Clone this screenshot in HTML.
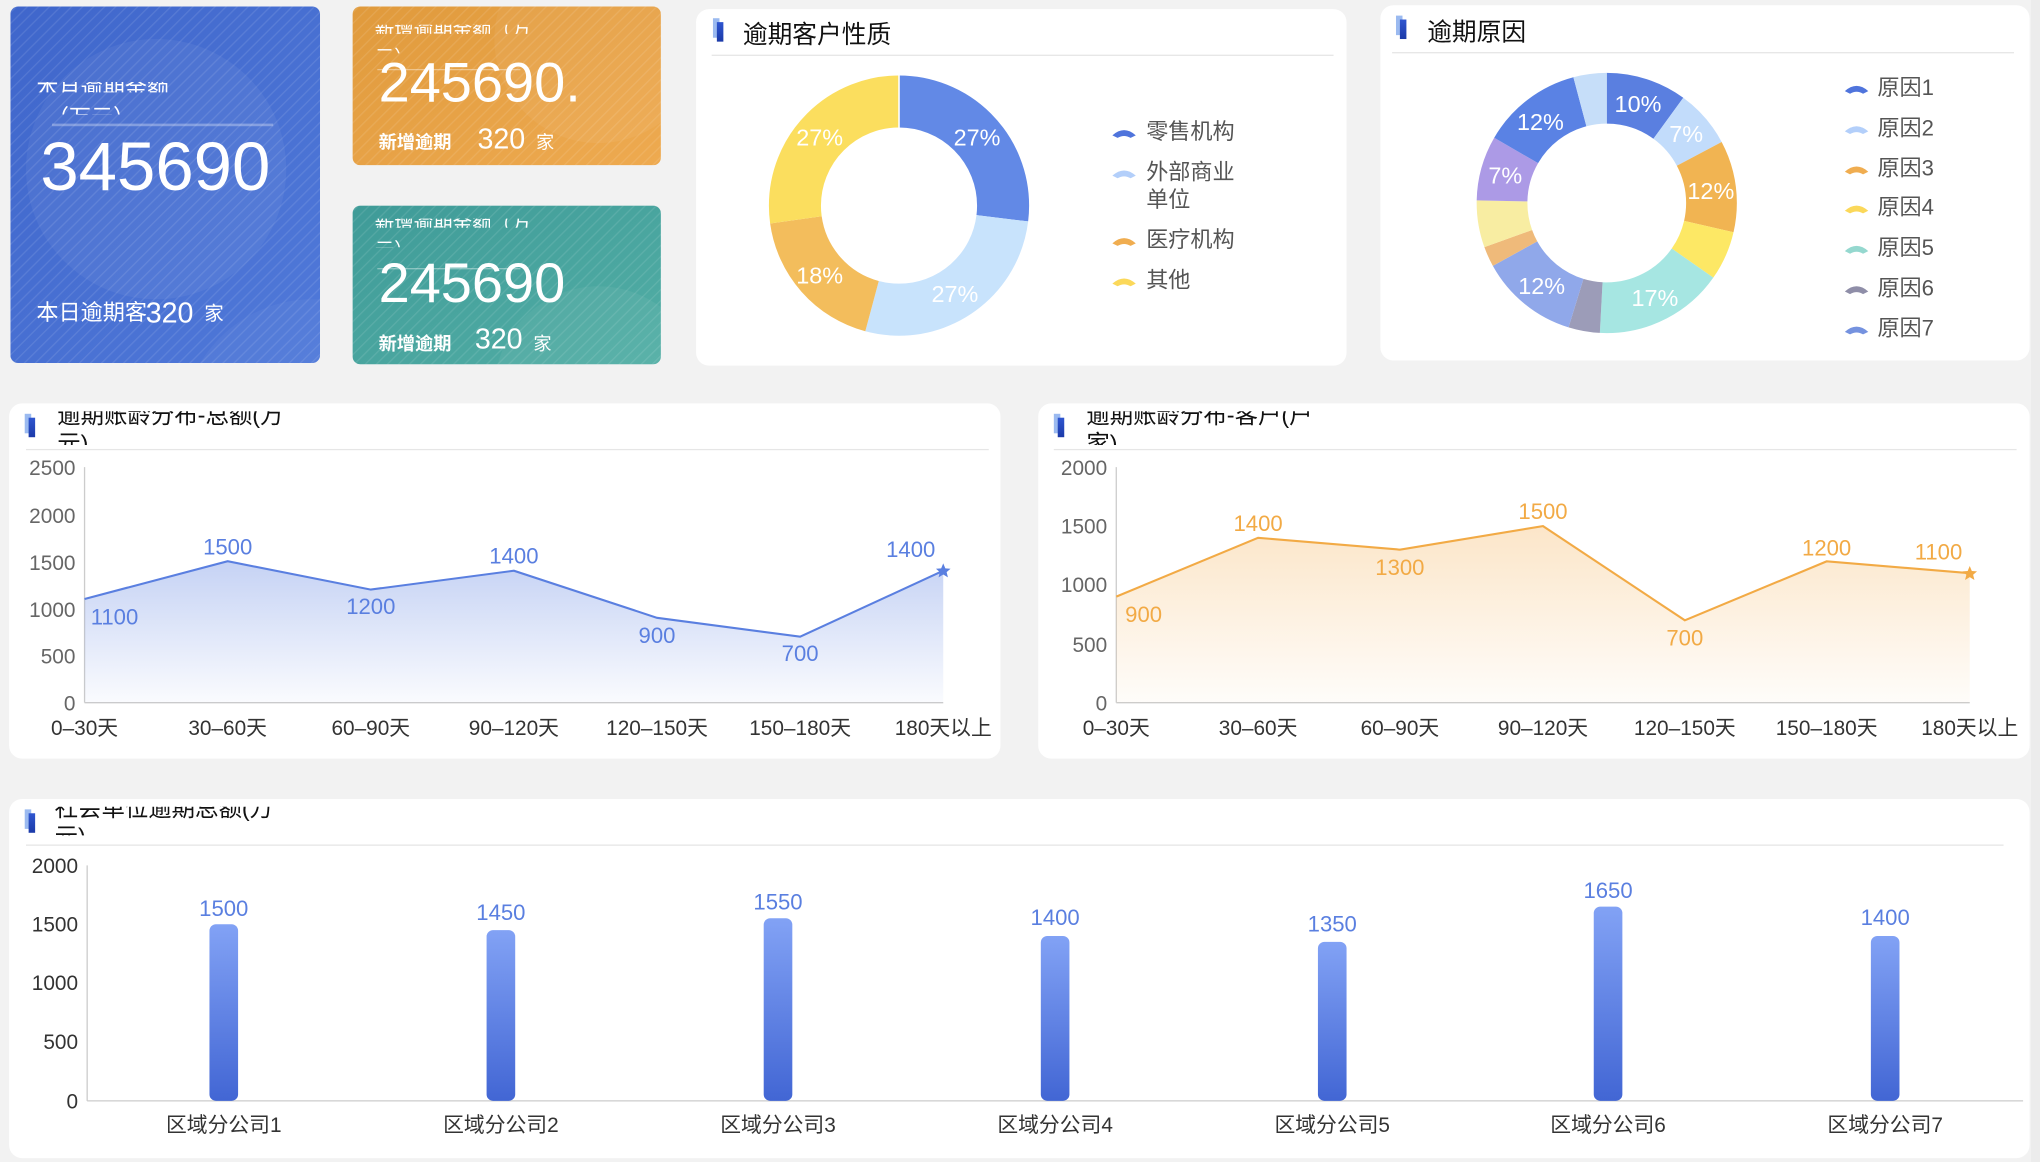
<!DOCTYPE html>
<html><head><meta charset="utf-8"><style>
html,body{margin:0;padding:0;background:#f2f2f2;width:2040px;height:1162px;overflow:hidden}
svg{display:block}
text{font-family:"Liberation Sans","Noto Sans CJK SC",sans-serif}
</style></head><body>
<svg width="2040" height="1162" viewBox="0 0 1568 893" preserveAspectRatio="none" xmlns="http://www.w3.org/2000/svg">
<defs>
<linearGradient id="gb" x1="0" y1="0" x2="1" y2="1"><stop offset="0" stop-color="#3f66cb"/><stop offset="1" stop-color="#5079d9"/></linearGradient>
<linearGradient id="go" x1="0" y1="0" x2="1" y2="1"><stop offset="0" stop-color="#e09a3c"/><stop offset="1" stop-color="#eeaa50"/></linearGradient>
<linearGradient id="gt" x1="0" y1="0" x2="1" y2="1"><stop offset="0" stop-color="#3f9b98"/><stop offset="1" stop-color="#52aea5"/></linearGradient>
<pattern id="stripe" width="6" height="6" patternUnits="userSpaceOnUse" patternTransform="rotate(45)"><rect width="1" height="6" fill="rgba(255,255,255,0.1)"/></pattern>
<linearGradient id="ab" x1="0" y1="0" x2="0" y2="1"><stop offset="0" stop-color="#5a7fe0" stop-opacity="0.35"/><stop offset="1" stop-color="#5a7fe0" stop-opacity="0.03"/></linearGradient>
<linearGradient id="ao" x1="0" y1="0" x2="0" y2="1"><stop offset="0" stop-color="#f3ab4a" stop-opacity="0.3"/><stop offset="1" stop-color="#f3ab4a" stop-opacity="0.03"/></linearGradient>
<linearGradient id="bar" x1="0" y1="0" x2="0" y2="1"><stop offset="0" stop-color="#82a2f5"/><stop offset="1" stop-color="#4266d4"/></linearGradient>
<linearGradient id="ic" x1="0" y1="0" x2="0" y2="1"><stop offset="0" stop-color="#2f56d0"/><stop offset="1" stop-color="#1b3aa8"/></linearGradient>
<clipPath id="c1"><rect x="8" y="5" width="238" height="274" rx="6"/></clipPath>
<clipPath id="c2"><rect x="271" y="5" width="237" height="122" rx="6"/></clipPath>
<clipPath id="c3"><rect x="271" y="158" width="237" height="122" rx="6"/></clipPath>
<clipPath id="b1"><rect x="0" y="63" width="300" height="8"/></clipPath>
<clipPath id="b2"><rect x="0" y="81" width="300" height="7"/></clipPath>
<clipPath id="o1"><rect x="0" y="19" width="500" height="7"/></clipPath>
<clipPath id="o2"><rect x="0" y="35" width="500" height="6"/></clipPath>
<clipPath id="q1"><rect x="0" y="168" width="500" height="7"/></clipPath>
<clipPath id="q2"><rect x="0" y="183" width="500" height="7"/></clipPath>
<clipPath id="n2"><rect x="280" y="20" width="168" height="100"/></clipPath>
<clipPath id="n3"><rect x="280" y="170" width="153" height="100"/></clipPath>
<clipPath id="lt1"><rect x="0" y="316" width="1568" height="26"/></clipPath>
<clipPath id="lt3"><rect x="0" y="620" width="1568" height="22"/></clipPath>
</defs>

<!-- KPI cards -->
<g clip-path="url(#c1)">
<rect x="8" y="5" width="238" height="274" fill="url(#gb)"/>
<circle cx="120" cy="130" r="100" fill="rgba(255,255,255,0.05)"/>
<circle cx="240" cy="330" r="100" fill="rgba(255,255,255,0.04)"/>
<rect x="8" y="5" width="238" height="274" fill="url(#stripe)"/>
<text x="28" y="74" fill="#fff" font-size="17" clip-path="url(#b1)">本月逾期金额</text>
<text x="36" y="96" fill="#fff" font-size="17" clip-path="url(#b2)">（万元）</text>
<rect x="40" y="95" width="170" height="2" fill="rgba(255,255,255,0.3)"/>
<text x="31" y="146" fill="#fff" font-size="53">345690</text>
<text x="28" y="246" fill="#fff" font-size="17">本日逾期客</text>
<text x="112" y="248" fill="#fff" font-size="22">320</text>
<text x="157" y="246" fill="#fff" font-size="15">家</text>
</g>
<g clip-path="url(#c2)">
<rect x="271" y="5" width="237" height="122" fill="url(#go)"/>
<circle cx="460" cy="30" r="80" fill="rgba(255,255,255,0.05)"/>
<rect x="271" y="5" width="237" height="122" fill="url(#stripe)"/>
<text x="288" y="28" fill="#fff" font-size="15" clip-path="url(#o1)">新增逾期金额（万</text>
<text x="288" y="49" fill="#fff" font-size="15" clip-path="url(#o2)">元）</text>
<rect x="290" y="53" width="110" height="1" fill="rgba(255,255,255,0.4)"/>
<text x="291" y="78" fill="#fff" font-size="43" clip-path="url(#n2)">245690.</text>
<text x="291" y="114" fill="#fff" font-size="14" font-weight="bold">新增逾期</text>
<text x="367" y="114" fill="#fff" font-size="22">320</text>
<text x="412" y="114" fill="#fff" font-size="14">家</text>
</g>
<g clip-path="url(#c3)">
<rect x="271" y="158" width="237" height="122" fill="url(#gt)"/>
<circle cx="460" cy="300" r="80" fill="rgba(255,255,255,0.05)"/>
<rect x="271" y="158" width="237" height="122" fill="url(#stripe)"/>
<text x="288" y="177" fill="#fff" font-size="15" clip-path="url(#q1)">新增逾期金额（万</text>
<text x="288" y="197" fill="#fff" font-size="15" clip-path="url(#q2)">元）</text>
<rect x="290" y="206" width="110" height="1" fill="rgba(255,255,255,0.4)"/>
<text x="291" y="232" fill="#fff" font-size="43" clip-path="url(#n3)">245690</text>
<text x="291" y="269" fill="#fff" font-size="14" font-weight="bold">新增逾期</text>
<text x="365" y="268" fill="#fff" font-size="22">320</text>
<text x="410" y="269" fill="#fff" font-size="14">家</text>
</g>

<!-- Donut 1 card -->
<rect x="535" y="7" width="500" height="274" rx="10" fill="#fff"/>
<rect x="548" y="14" width="5" height="15" fill="#9bbaf0"/><rect x="551" y="17" width="5" height="15" fill="url(#ic)"/>
<text x="571" y="33" font-size="19" fill="#111">逾期客户性质</text>
<rect x="547" y="42" width="478" height="1" fill="#e6e6e6"/>
<g transform="rotate(-90 691 158)" fill="none" stroke-width="40">
<circle cx="691" cy="158" r="80" stroke="#6289e6" stroke-dasharray="135.4 600" stroke-dashoffset="0"/>
<circle cx="691" cy="158" r="80" stroke="#c8e3fc" stroke-dasharray="136.8 600" stroke-dashoffset="-135.4"/>
<circle cx="691" cy="158" r="80" stroke="#f3bd5c" stroke-dasharray="93.6 600" stroke-dashoffset="-272.2"/>
<circle cx="691" cy="158" r="80" stroke="#fbde5e" stroke-dasharray="137 600" stroke-dashoffset="-365.8"/>
</g>
<g stroke="#fff" stroke-width="1.2"><line x1="691" y1="58" x2="691" y2="98"/></g>
<g fill="#fff" font-size="18" text-anchor="middle">
<text x="751" y="112">27%</text><text x="734" y="232">27%</text><text x="630" y="218">18%</text><text x="630" y="112">27%</text></g>
<g font-size="17" fill="#555">
<path d="M855 104 q9 -8 18 0 l-4 2 q-5 -3 -10 0z" fill="#4f74dc"/><text x="881" y="107">零售机构</text>
<path d="M855 135 q9 -8 18 0 l-4 2 q-5 -3 -10 0z" fill="#b3cffa"/><text x="881" y="138">外部商业</text><text x="881" y="159">单位</text>
<path d="M855 187 q9 -8 18 0 l-4 2 q-5 -3 -10 0z" fill="#f0ad50"/><text x="881" y="190">医疗机构</text>
<path d="M855 218 q9 -8 18 0 l-4 2 q-5 -3 -10 0z" fill="#fbd85a"/><text x="881" y="221">其他</text>
</g>

<!-- Donut 2 card -->
<rect x="1061" y="4" width="499" height="273" rx="10" fill="#fff"/>
<rect x="1073" y="12" width="5" height="15" fill="#9bbaf0"/><rect x="1076" y="15" width="5" height="15" fill="url(#ic)"/>
<text x="1097" y="31" font-size="19" fill="#111">逾期原因</text>
<rect x="1070" y="40" width="478" height="1" fill="#e6e6e6"/>
<g transform="rotate(-90 1235 156)" fill="none" stroke-width="39">
<circle cx="1235" cy="156" r="80.5" stroke="#5a7fe0" stroke-dasharray="50.6 600" stroke-dashoffset="0"/>
<circle cx="1235" cy="156" r="80.5" stroke="#c2dcfb" stroke-dasharray="36.5 600" stroke-dashoffset="-50.6"/>
<circle cx="1235" cy="156" r="80.5" stroke="#f1b452" stroke-dasharray="57.6 600" stroke-dashoffset="-87.1"/>
<circle cx="1235" cy="156" r="80.5" stroke="#fde865" stroke-dasharray="30.9 600" stroke-dashoffset="-144.7"/>
<circle cx="1235" cy="156" r="80.5" stroke="#a6e6e2" stroke-dasharray="81.5 600" stroke-dashoffset="-175.6"/>
<circle cx="1235" cy="156" r="80.5" stroke="#9c9cb8" stroke-dasharray="19.7 600" stroke-dashoffset="-257.1"/>
<circle cx="1235" cy="156" r="80.5" stroke="#90a8ea" stroke-dasharray="61.8 600" stroke-dashoffset="-276.8"/>
<circle cx="1235" cy="156" r="80.5" stroke="#efba7a" stroke-dasharray="12.7 600" stroke-dashoffset="-338.6"/>
<circle cx="1235" cy="156" r="80.5" stroke="#f8eda2" stroke-dasharray="29.5 600" stroke-dashoffset="-351.3"/>
<circle cx="1235" cy="156" r="80.5" stroke="#ac9ae6" stroke-dasharray="40.7 600" stroke-dashoffset="-380.8"/>
<circle cx="1235" cy="156" r="80.5" stroke="#5a82e4" stroke-dasharray="63.2 600" stroke-dashoffset="-421.5"/>
<circle cx="1235" cy="156" r="80.5" stroke="#c6def9" stroke-dasharray="21.1 600" stroke-dashoffset="-484.7"/>
</g>
<g fill="#fff" font-size="18" text-anchor="middle">
<text x="1259" y="86">10%</text><text x="1296" y="109">7%</text><text x="1315" y="153">12%</text><text x="1272" y="235">17%</text><text x="1185" y="226">12%</text><text x="1157" y="141">7%</text><text x="1184" y="100">12%</text></g>
<g font-size="17" fill="#555">
<path d="M1418 70 q9 -8 18 0 l-4 2 q-5 -3 -10 0z" fill="#4f74dc"/><text x="1443" y="73">原因1</text>
<path d="M1418 101 q9 -8 18 0 l-4 2 q-5 -3 -10 0z" fill="#b3cffa"/><text x="1443" y="104">原因2</text>
<path d="M1418 132 q9 -8 18 0 l-4 2 q-5 -3 -10 0z" fill="#f0ad50"/><text x="1443" y="135">原因3</text>
<path d="M1418 162 q9 -8 18 0 l-4 2 q-5 -3 -10 0z" fill="#fbd85a"/><text x="1443" y="165">原因4</text>
<path d="M1418 193 q9 -8 18 0 l-4 2 q-5 -3 -10 0z" fill="#95d8cf"/><text x="1443" y="196">原因5</text>
<path d="M1418 224 q9 -8 18 0 l-4 2 q-5 -3 -10 0z" fill="#8f8ea8"/><text x="1443" y="227">原因6</text>
<path d="M1418 255 q9 -8 18 0 l-4 2 q-5 -3 -10 0z" fill="#7592df"/><text x="1443" y="258">原因7</text>
</g>
<rect x="1561" y="0" width="7" height="893" fill="#ececec"/>

<!-- Line chart 1 -->
<rect x="7" y="310" width="762" height="273" rx="10" fill="#fff"/>
<rect x="19" y="318" width="5" height="15" fill="#9bbaf0"/><rect x="22" y="321" width="5" height="15" fill="url(#ic)"/>
<g clip-path="url(#lt1)" font-size="18" fill="#111"><text x="44" y="325">逾期账龄分布-总额(万</text><text x="44" y="347">元)</text></g>
<rect x="20" y="345" width="740" height="1" fill="#e6e6e6"/>
<g font-size="16" fill="#666" text-anchor="end">
<text x="58" y="365">2500</text><text x="58" y="402">2000</text><text x="58" y="438">1500</text><text x="58" y="474">1000</text><text x="58" y="510">500</text><text x="58" y="546">0</text></g>
<line x1="65" y1="359" x2="65" y2="540" stroke="#ccc"/><line x1="65" y1="540" x2="725" y2="540" stroke="#ccc"/>
<path d="M65 460.3 L175 431.3 L285 453.1 L395 438.6 L505 474.8 L615 489.3 L725 438.6 L725 540 L65 540Z" fill="url(#ab)"/>
<path d="M65 460.3 L175 431.3 L285 453.1 L395 438.6 L505 474.8 L615 489.3 L725 438.6" fill="none" stroke="#5a7fe0" stroke-width="1.6"/>
<path d="M725 433 l1.6 3.8 4 .3 -3 2.6 1 4 -3.6 -2.2 -3.6 2.2 1 -4 -3 -2.6 4 -.3z" fill="#5a7fe0"/>
<g font-size="17" fill="#5a7fe0" text-anchor="middle">
<text x="88" y="480">1100</text><text x="175" y="426">1500</text><text x="285" y="472">1200</text><text x="395" y="433">1400</text><text x="505" y="494">900</text><text x="615" y="508">700</text><text x="700" y="428">1400</text></g>
<g font-size="16" fill="#333" text-anchor="middle">
<text x="65" y="565">0–30天</text><text x="175" y="565">30–60天</text><text x="285" y="565">60–90天</text><text x="395" y="565">90–120天</text><text x="505" y="565">120–150天</text><text x="615" y="565">150–180天</text><text x="725" y="565">180天以上</text></g>

<!-- Line chart 2 -->
<rect x="798" y="310" width="762" height="273" rx="10" fill="#fff"/>
<rect x="810" y="318" width="5" height="15" fill="#9bbaf0"/><rect x="813" y="321" width="5" height="15" fill="url(#ic)"/>
<g clip-path="url(#lt1)" font-size="18" fill="#111"><text x="835" y="325">逾期账龄分布-客户(户</text><text x="835" y="347">家)</text></g>
<rect x="810" y="345" width="740" height="1" fill="#e6e6e6"/>
<g font-size="16" fill="#666" text-anchor="end">
<text x="851" y="365">2000</text><text x="851" y="410">1500</text><text x="851" y="455">1000</text><text x="851" y="501">500</text><text x="851" y="546">0</text></g>
<line x1="858" y1="359" x2="858" y2="540" stroke="#ccc"/><line x1="858" y1="540" x2="1514" y2="540" stroke="#ccc"/>
<path d="M858 458.5 L967 413.3 L1076 422.4 L1186 404.3 L1295 476.7 L1404 431.4 L1514 440.5 L1514 540 L858 540Z" fill="url(#ao)"/>
<path d="M858 458.5 L967 413.3 L1076 422.4 L1186 404.3 L1295 476.7 L1404 431.4 L1514 440.5" fill="none" stroke="#f2aa45" stroke-width="1.6"/>
<path d="M1514 435 l1.6 3.8 4 .3 -3 2.6 1 4 -3.6 -2.2 -3.6 2.2 1 -4 -3 -2.6 4 -.3z" fill="#f2aa45"/>
<g font-size="17" fill="#f2aa45" text-anchor="middle">
<text x="879" y="478">900</text><text x="967" y="408">1400</text><text x="1076" y="442">1300</text><text x="1186" y="399">1500</text><text x="1295" y="496">700</text><text x="1404" y="427">1200</text><text x="1490" y="430">1100</text></g>
<g font-size="16" fill="#333" text-anchor="middle">
<text x="858" y="565">0–30天</text><text x="967" y="565">30–60天</text><text x="1076" y="565">60–90天</text><text x="1186" y="565">90–120天</text><text x="1295" y="565">120–150天</text><text x="1404" y="565">150–180天</text><text x="1514" y="565">180天以上</text></g>

<!-- Bar chart -->
<rect x="7" y="614" width="1553" height="276" rx="10" fill="#fff"/>
<rect x="19" y="622" width="5" height="15" fill="#9bbaf0"/><rect x="22" y="625" width="5" height="15" fill="url(#ic)"/>
<g clip-path="url(#lt3)" font-size="18" fill="#111"><text x="42" y="627">社会单位逾期总额(万</text><text x="42" y="649">元)</text></g>
<rect x="20" y="649" width="1520" height="1" fill="#e6e6e6"/>
<g font-size="16" fill="#333" text-anchor="end">
<text x="60" y="671">2000</text><text x="60" y="716">1500</text><text x="60" y="761">1000</text><text x="60" y="806">500</text><text x="60" y="852">0</text></g>
<line x1="67" y1="665" x2="67" y2="846" stroke="#ccc"/><line x1="67" y1="846" x2="1555" y2="846" stroke="#ccc"/>
<g fill="url(#bar)">
<rect x="161" y="710.3" width="22" height="135.7" rx="5"/>
<rect x="374" y="714.8" width="22" height="131.2" rx="5"/>
<rect x="587" y="705.7" width="22" height="140.3" rx="5"/>
<rect x="800" y="719.3" width="22" height="126.7" rx="5"/>
<rect x="1013" y="723.8" width="22" height="122.2" rx="5"/>
<rect x="1225" y="696.7" width="22" height="149.3" rx="5"/>
<rect x="1438" y="719.3" width="22" height="126.7" rx="5"/>
</g>
<g font-size="17" fill="#5a7fe0" text-anchor="middle">
<text x="172" y="704">1500</text><text x="385" y="707">1450</text><text x="598" y="699">1550</text><text x="811" y="711">1400</text><text x="1024" y="716">1350</text><text x="1236" y="690">1650</text><text x="1449" y="711">1400</text></g>
<g font-size="16" fill="#333" text-anchor="middle">
<text x="172" y="870">区域分公司1</text><text x="385" y="870">区域分公司2</text><text x="598" y="870">区域分公司3</text><text x="811" y="870">区域分公司4</text><text x="1024" y="870">区域分公司5</text><text x="1236" y="870">区域分公司6</text><text x="1449" y="870">区域分公司7</text></g>
</svg>
</body></html>
